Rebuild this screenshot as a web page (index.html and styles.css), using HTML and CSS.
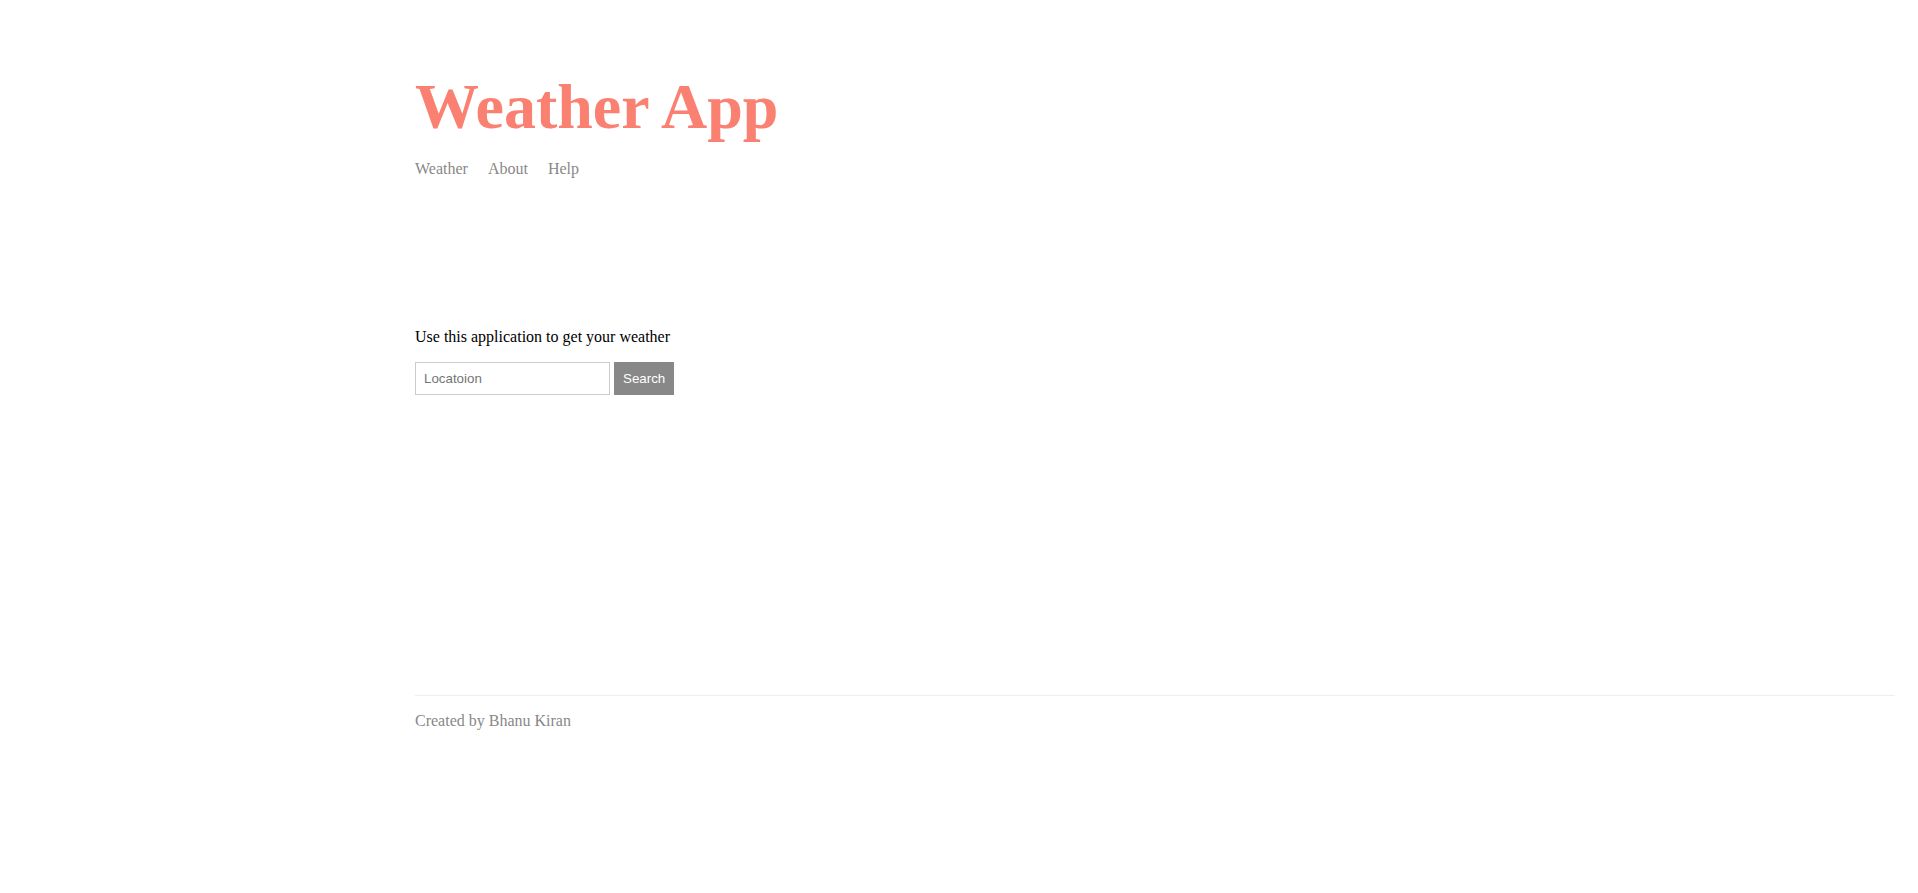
FILE: index.html
```html
<!DOCTYPE html>
<html>
<head>
<meta charset="utf-8">
<title>Weather App</title>
<link rel="stylesheet" href="styles.css">
</head>
<body>
<div class="page">
  <header class="header">
    <h1 class="title">Weather App</h1>
    <nav class="nav">
      <a class="nav-link" href="#">Weather</a>
      <a class="nav-link" href="#">About</a>
      <a class="nav-link" href="#">Help</a>
    </nav>
  </header>
  <main class="main">
    <p class="intro">Use this application to get your weather</p>
    <form class="search-form">
      <input class="search-input" type="text" placeholder="Locatoion">
      <button class="search-button" type="button">Search</button>
    </form>
  </main>
  <footer class="footer">
    <p class="footer-text">Created by Bhanu Kiran</p>
  </footer>
</div>
</body>
</html>
```
FILE: styles.css
```css
html, body {
  margin: 0;
  padding: 0;
  background: #ffffff;
}
body {
  font-family: "Liberation Serif", "Times New Roman", serif;
}
.page {
  margin: 0 23px 0 415px;
  padding-top: 75px;
}
.title {
  margin: 0;
  font-size: 64px;
  line-height: 64px;
  font-weight: bold;
  color: #fa8072;
}
.nav {
  margin-top: 20px;
  display: flex;
  gap: 20px;
  line-height: 20px;
  font-size: 16px;
}
.nav-link {
  color: #888888;
  text-decoration: none;
}
.main {
  margin-top: 148px;
  height: 368px;
}
.intro {
  margin: 0;
  font-size: 16px;
  line-height: 20px;
  color: #000000;
}
.search-form {
  margin-top: 15px;
  display: flex;
  gap: 4px;
}
.search-input {
  box-sizing: border-box;
  width: 195px;
  height: 33px;
  margin: 0;
  padding: 0 8px;
  border: 1px solid #cccccc;
  font-family: "Liberation Sans", Arial, sans-serif;
  font-size: 13.33px;
  color: #333;
  outline: none;
}
.search-input::placeholder {
  color: #757575;
}
.search-button {
  box-sizing: border-box;
  height: 33px;
  margin: 0;
  padding: 0 9px;
  border: none;
  background: #888888;
  color: #ffffff;
  font-family: "Liberation Sans", Arial, sans-serif;
  font-size: 13.33px;
  cursor: pointer;
}
.footer {
  border-top: 1px solid #eeeeee;
  padding-top: 15px;
}
.footer-text {
  margin: 0;
  font-size: 16px;
  line-height: 20px;
  color: #888888;
}
```
